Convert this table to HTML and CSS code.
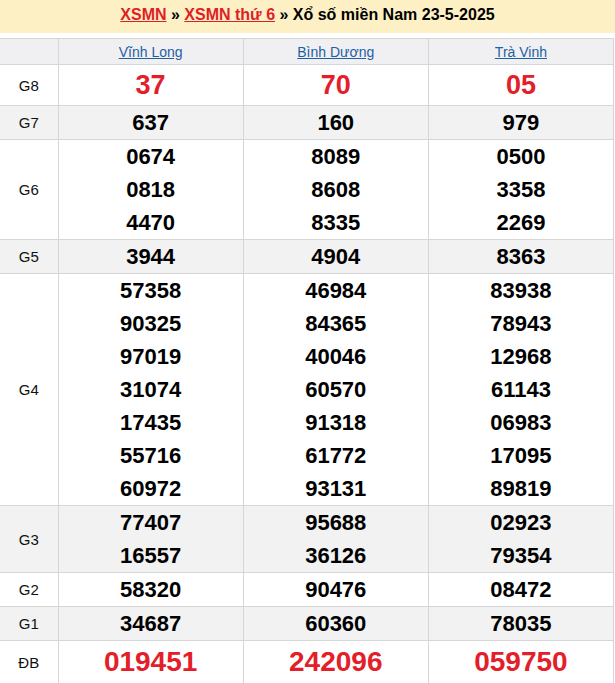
FILE: index.html
```html
<!DOCTYPE html>
<html lang="vi">
<head>
<meta charset="utf-8">
<link rel="stylesheet" href="styles.css">
</head>
<body>
<div class="banner"><a class="red" href="#">XSMN</a> » <a class="red" href="#">XSMN thứ 6</a> » Xổ số miền Nam 23-5-2025</div>
<table class="kq">
  <colgroup><col class="c0"><col class="c1"><col class="c1"><col class="c1"></colgroup>
  <tr class="head"><th></th><th><a href="#">Vĩnh Long</a></th><th><a href="#">Bình Dương</a></th><th><a href="#">Trà Vinh</a></th></tr>
  <tr class="g8"><td class="lb">G8</td><td><div>37</div></td><td><div>70</div></td><td><div>05</div></td></tr>
  <tr class="alt"><td class="lb">G7</td><td><div>637</div></td><td><div>160</div></td><td><div>979</div></td></tr>
  <tr><td class="lb">G6</td><td><div>0674</div><div>0818</div><div>4470</div></td><td><div>8089</div><div>8608</div><div>8335</div></td><td><div>0500</div><div>3358</div><div>2269</div></td></tr>
  <tr class="alt"><td class="lb">G5</td><td><div>3944</div></td><td><div>4904</div></td><td><div>8363</div></td></tr>
  <tr><td class="lb">G4</td>
    <td><div>57358</div><div>90325</div><div>97019</div><div>31074</div><div>17435</div><div>55716</div><div>60972</div></td>
    <td><div>46984</div><div>84365</div><div>40046</div><div>60570</div><div>91318</div><div>61772</div><div>93131</div></td>
    <td><div>83938</div><div>78943</div><div>12968</div><div>61143</div><div>06983</div><div>17095</div><div>89819</div></td></tr>
  <tr class="alt"><td class="lb">G3</td><td><div>77407</div><div>16557</div></td><td><div>95688</div><div>36126</div></td><td><div>02923</div><div>79354</div></td></tr>
  <tr><td class="lb">G2</td><td><div>58320</div></td><td><div>90476</div></td><td><div>08472</div></td></tr>
  <tr class="alt"><td class="lb">G1</td><td><div>34687</div></td><td><div>60360</div></td><td><div>78035</div></td></tr>
  <tr class="db"><td class="lb">ĐB</td><td><div>019451</div></td><td><div>242096</div></td><td><div>059750</div></td></tr>
</table>
</body>
</html>
```
FILE: styles.css
```css
html, body { margin: 0; padding: 0; background: #fff; }
body { font-family: "Liberation Sans", Arial, sans-serif; color: #000; }
.banner {
  background: #fdf0c5;
  height: 33px;
  line-height: 29px;
  text-align: center;
  font-weight: bold;
  font-size: 16px;
  margin-bottom: 5px;
}
.banner a.red { color: #e01f25; text-decoration: underline; }
.kq {
  border-collapse: collapse;
  width: 614px;
  table-layout: fixed;
}
.kq col.c0 { width: 58px; }
.kq col.c1 { width: 185px; }
.kq th, .kq td {
  border: 1px solid #d6d6d6;
  padding: 0;
  text-align: center;
  vertical-align: middle;
}
.kq th:first-child, .kq td:first-child { border-left: none; }
.kq .head th {
  background: #f0f0f2;
  height: 25px;
  font-weight: normal;
  font-size: 14px;
}
.kq .head a { color: #1f5fa3; text-decoration: underline; }
.kq td div {
  font-size: 22px;
  font-weight: bold;
  line-height: 33px;
  height: 33px;
}
.kq td.lb { font-size: 15px; color: #111; }
.kq tr.alt td { background: #f2f2f2; }
.kq tr.g8 td div { font-size: 27px; color: #e3202a; line-height: 40px; height: 40px; }
.kq tr.db td div { font-size: 28px; color: #e3202a; line-height: 42px; height: 42px; }
```
